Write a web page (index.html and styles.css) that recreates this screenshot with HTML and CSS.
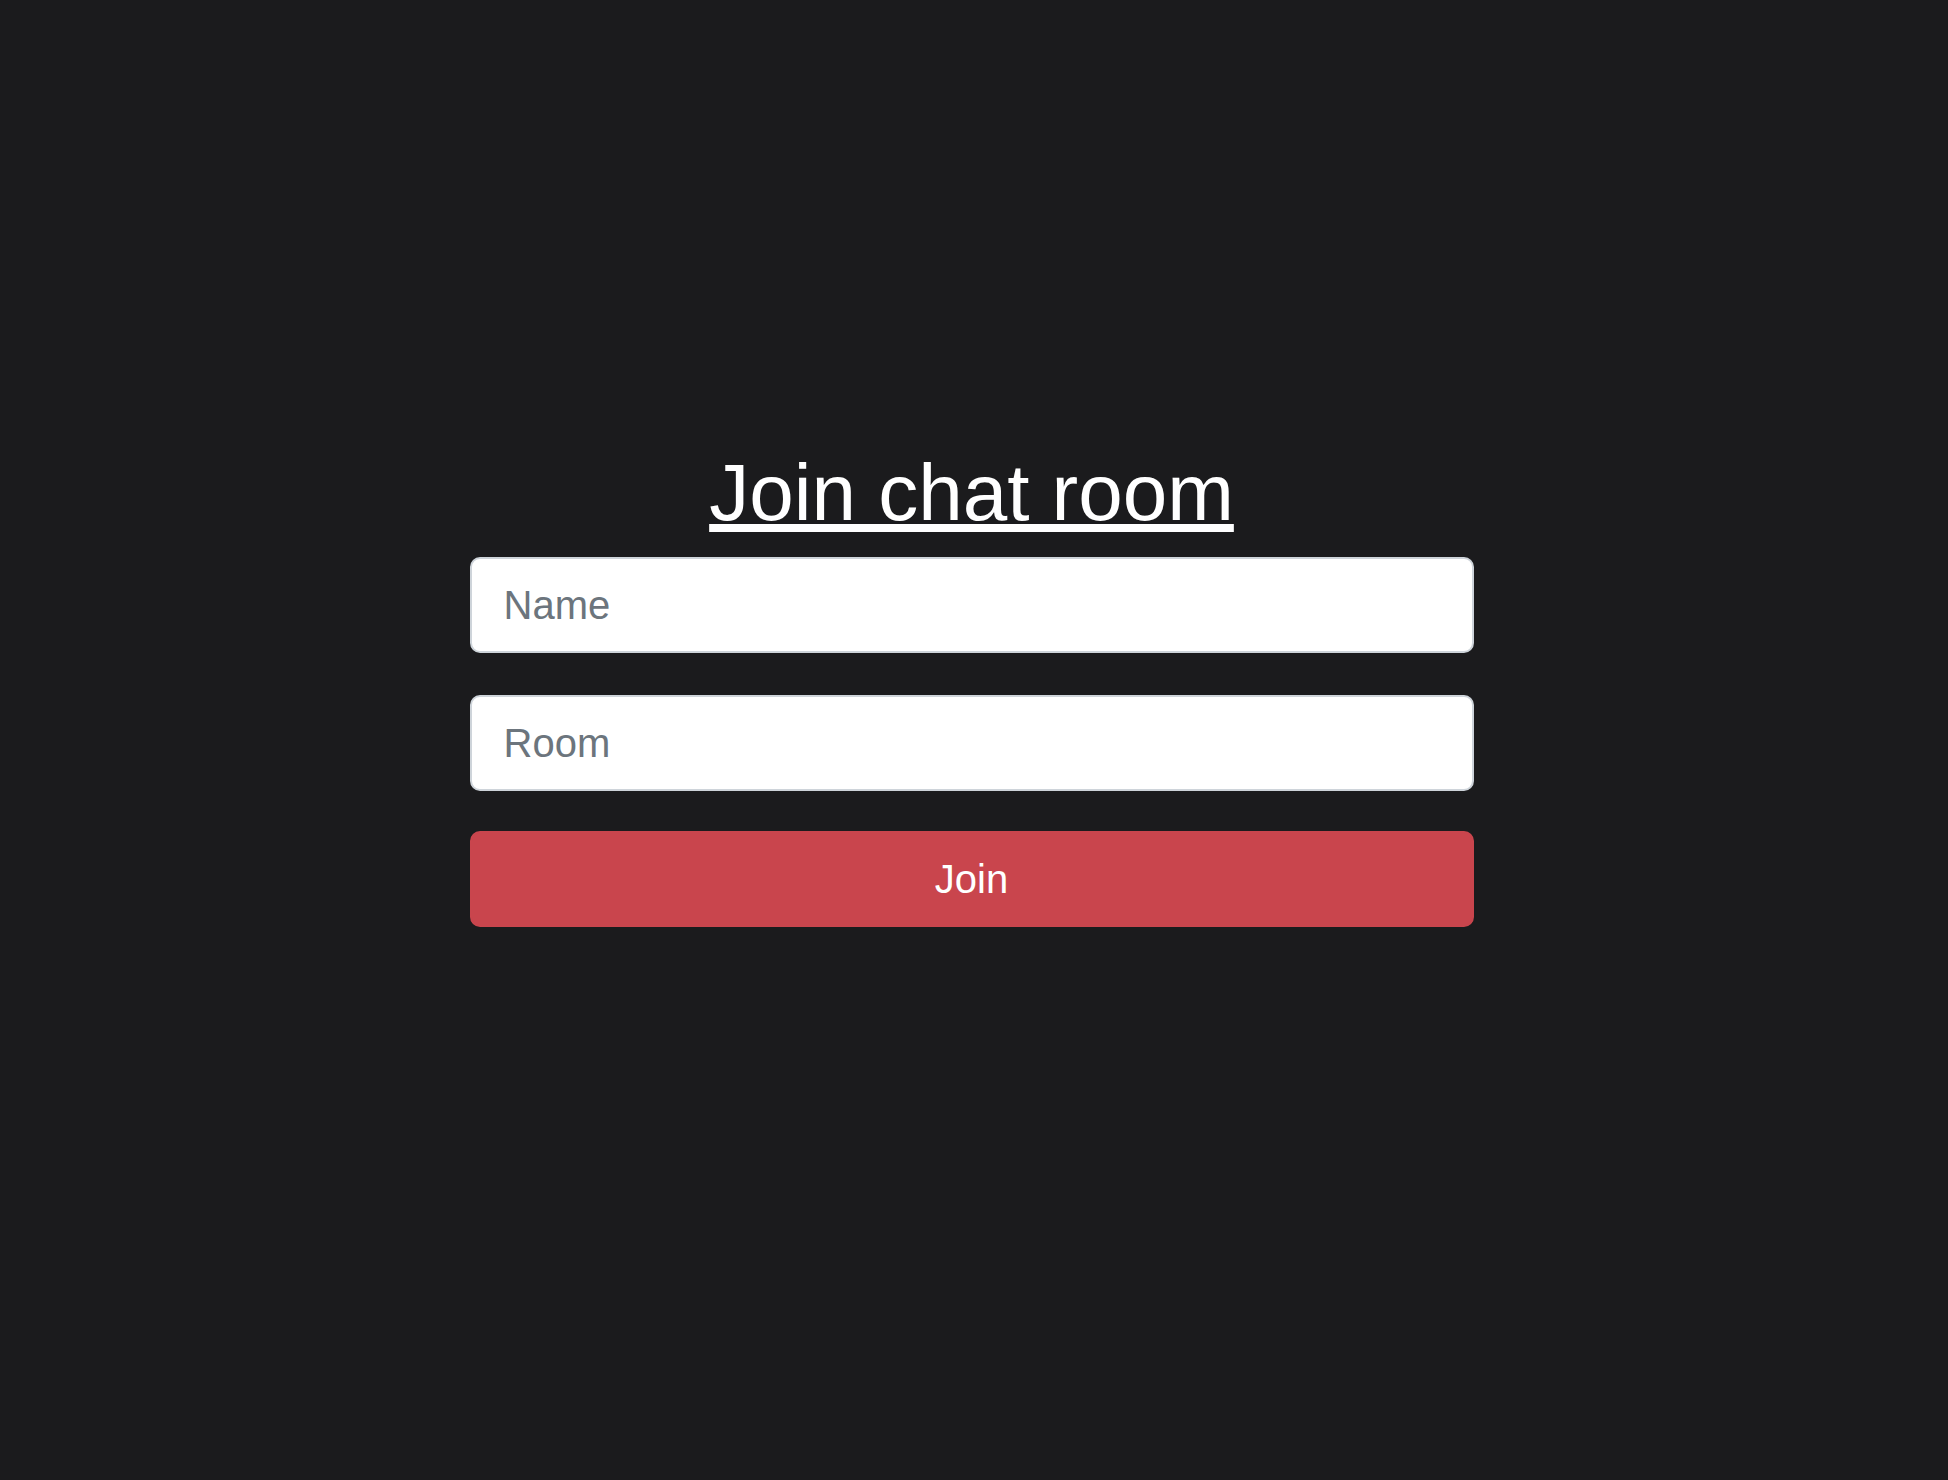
FILE: index.html
```html
<!DOCTYPE html>
<html lang="en">
<head>
<meta charset="utf-8">
<title>Join chat room</title>
<link rel="stylesheet" href="styles.css">
</head>
<body>
<main class="page">
  <form class="join-form">
    <h1 class="title">Join chat room</h1>
    <div class="field field-first">
      <input class="input" type="text" placeholder="Name">
    </div>
    <div class="field">
      <input class="input" type="text" placeholder="Room">
    </div>
    <button class="btn" type="button">Join</button>
  </form>
</main>
</body>
</html>
```

FILE: styles.css
```css
html, body {
  margin: 0;
  padding: 0;
  background: #1b1b1d;
  height: 100%;
}

body {
  font-family: "Liberation Sans", Arial, Helvetica, sans-serif;
  color: #ffffff;
}

.page {
  display: flex;
  justify-content: center;
  padding: 445px 5px 0 0;
}

.join-form {
  width: 1004px;
  display: flex;
  flex-direction: column;
}

.title {
  margin: 0 0 16px 0;
  font-size: 80px;
  font-weight: 400;
  line-height: 96px;
  text-align: center;
  text-decoration: underline;
  color: #ffffff;
}

.field {
  margin-bottom: 40px;
}

.field-first {
  margin-bottom: 42px;
}

.input {
  box-sizing: border-box;
  display: block;
  width: 100%;
  height: 96px;
  padding: 16px 32px;
  font-family: "Liberation Sans", Arial, Helvetica, sans-serif;
  font-size: 40px;
  line-height: 60px;
  color: #495057;
  background: #ffffff;
  border: 2px solid #ced4da;
  border-radius: 10px;
  outline: none;
}

.input::placeholder {
  color: #6c757d;
  opacity: 1;
}

.btn {
  box-sizing: border-box;
  display: block;
  width: 100%;
  height: 96px;
  padding: 16px 32px;
  font-family: "Liberation Sans", Arial, Helvetica, sans-serif;
  font-size: 40px;
  line-height: 60px;
  color: #ffffff;
  background: #c9454d;
  border: 2px solid #c9454d;
  border-radius: 10px;
  cursor: pointer;
}
```
